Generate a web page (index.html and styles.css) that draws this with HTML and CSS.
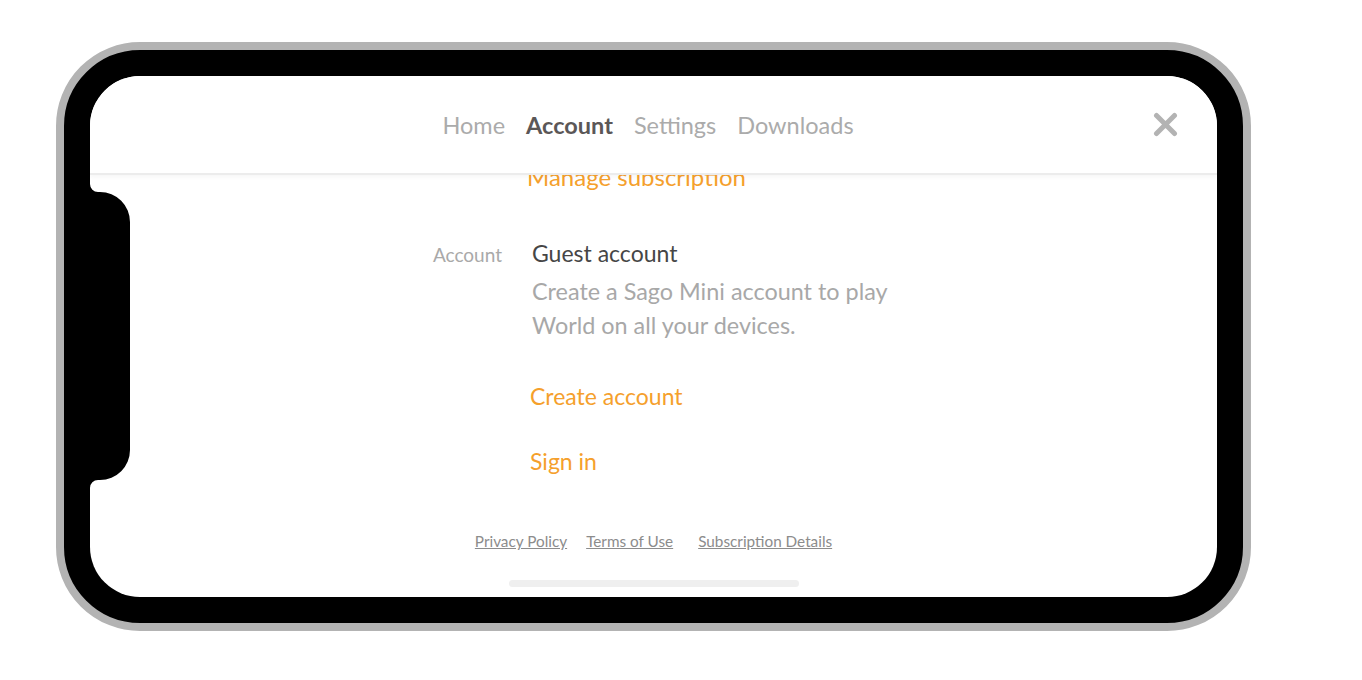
FILE: index.html
```html
<!DOCTYPE html>
<html lang="en">
<head>
    <meta charset="UTF-8">
    <meta name="viewport" content="width=device-width, initial-scale=1.0">
    <title>Account</title>
    <link rel="stylesheet" href="styles.css">
</head>
<body>
    <div class="phone">
        <div class="screen">
            <svg class="notch" width="40" height="412" viewBox="0 0 40 412">
                <path d="M0 108 A8 8 0 0 0 8 116 L10 116 A30 30 0 0 1 40 146 L40 374 A30 30 0 0 1 10 404 L8 404 A8 8 0 0 0 0 412 Z" fill="#000"/>
            </svg>

            <header class="topbar">
                <div></div>
                <nav class="tabs">
                    <a href="#">Home</a>
                    <a href="#" class="active">Account</a>
                    <a href="#">Settings</a>
                    <a href="#">Downloads</a>
                </nav>
                <button class="close" type="button" aria-label="Close">
                    <svg width="25" height="25" viewBox="0 0 25 25">
                        <path d="M3.5 3.5 L21.5 21.5 M21.5 3.5 L3.5 21.5" stroke="#b3b3b3" stroke-width="5" stroke-linecap="round" fill="none"/>
                    </svg>
                </button>
            </header>

            <main class="scroll">
                <div class="panel">
                    <a href="#" class="link manage">Manage subscription</a>
                    <div class="row">
                        <div class="label">Account</div>
                        <div class="value">
                            <div class="title">Guest account</div>
                            <p class="desc">Create a Sago Mini account to play<br>World on all your devices.</p>
                            <a href="#" class="link create">Create account</a>
                            <a href="#" class="link signin">Sign in</a>
                        </div>
                    </div>
                </div>
            </main>

            <footer class="footer">
                <a href="#">Privacy Policy</a>
                <a href="#">Terms of Use</a>
                <a href="#" class="details">Subscription Details</a>
            </footer>
            <div class="home-bar"></div>
        </div>
    </div>
</body>
</html>
```

FILE: styles.css
```css
body {
    margin: 0;
    background: #fff;
    font-family: Lato, "Noto Sans", sans-serif;
}

.phone {
    box-sizing: border-box;
    width: 1195px;
    height: 589px;
    margin: 42px 0 0 56px;
    padding: 26px;
    background: #000;
    border: 8px solid #b3b3b3;
    border-radius: 84px;
}

.screen {
    position: relative;
    height: 100%;
    display: flex;
    flex-direction: column;
    background: #fff;
    border-radius: 50px;
    overflow: hidden;
}

.notch {
    position: absolute;
    left: 0;
    top: 0;
    z-index: 2;
}

.topbar {
    position: relative;
    z-index: 1;
    flex-shrink: 0;
    display: grid;
    grid-template-columns: 1fr auto 1fr;
    align-items: center;
    height: 97px;
    padding: 0 39px 0 28px;
    background: #fff;
    border-bottom: 2px solid #ececec;
    box-shadow: 0 2px 4px rgba(0,0,0,0.04);
}

.tabs {
    display: flex;
    gap: 21px;
    font-size: 23.5px;
    line-height: 30px;
}

.tabs a {
    color: #ababab;
    text-decoration: none;
}

.tabs a.active {
    color: #5b5757;
    font-weight: bold;
}

.close {
    justify-self: end;
    width: 25px;
    height: 25px;
    padding: 0;
    border: none;
    background: none;
    cursor: pointer;
}

.close svg {
    display: block;
}

.scroll {
    flex: 1;
    overflow: hidden;
}

.panel {
    padding-left: 302px;
    margin-top: -13px;
}

.link {
    display: block;
    width: max-content;
    margin-left: -2px;
    color: #f5a02c;
    text-decoration: none;
    font-size: 23px;
    line-height: 30px;
}

.manage {
    margin-left: 135px;
    font-size: 24px;
}

.row {
    display: flex;
    align-items: baseline;
    gap: 30px;
    margin-top: 46px;
}

.label {
    width: 110px;
    text-align: right;
    font-size: 19px;
    line-height: 30px;
    color: #a9a9a9;
}

.title {
    font-size: 23px;
    line-height: 30px;
    color: #464646;
}

.desc {
    margin: 6px 0 0;
    font-size: 23.4px;
    line-height: 34px;
    color: #a8a8a8;
}

.create {
    margin-top: 39px;
}

.signin {
    margin-top: 35px;
}

.footer {
    flex-shrink: 0;
    display: flex;
    justify-content: center;
    gap: 19px;
    margin-bottom: 29px;
    font-size: 15.3px;
    line-height: 20px;
}

.footer a {
    color: #8c8c8c;
}

.footer a.details {
    margin-left: 6px;
}

.home-bar {
    flex-shrink: 0;
    width: 290px;
    height: 7px;
    margin: 0 auto 10px;
    border-radius: 4px;
    background: #efefef;
}
```
